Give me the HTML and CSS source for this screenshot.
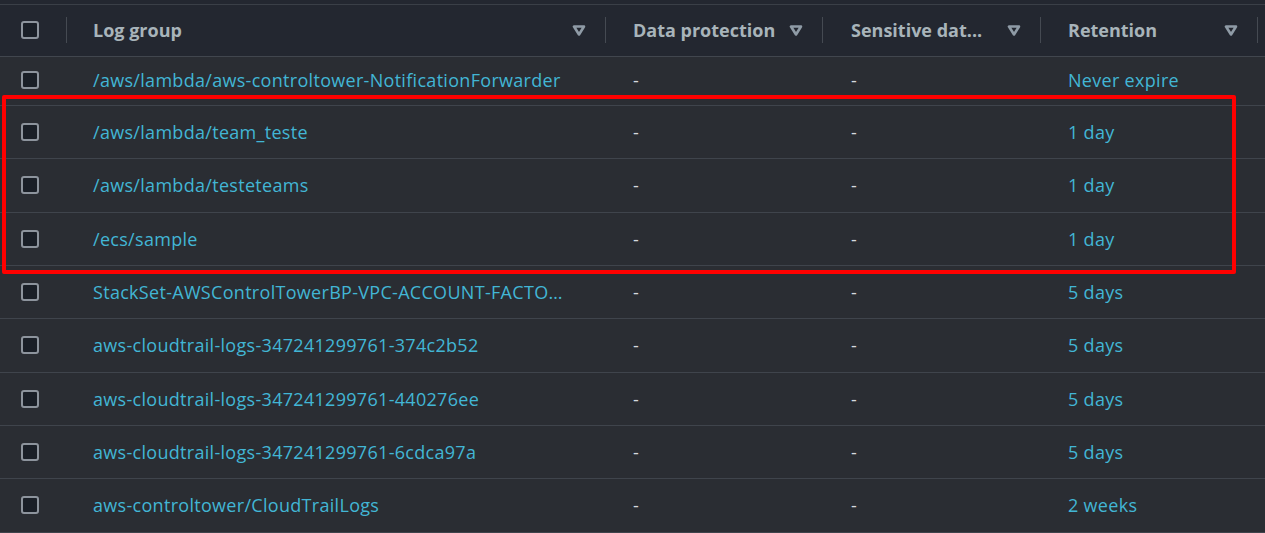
FILE: index.html
```html
<!DOCTYPE html>
<html lang="en">
<head>
<meta charset="utf-8">
<title>Log groups</title>
<link rel="stylesheet" href="styles.css">
</head>
<body>
<div class="table">
  <div class="row head">
    <div class="cell c0"><span class="cb"></span><span class="sep"></span></div>
    <div class="cell c1"><span class="label">Log group</span><svg class="tri" viewBox="0 0 14 11"><polygon points="2,1.5 12,1.5 7,9.5" /></svg><span class="sep"></span></div>
    <div class="cell c2"><span class="label">Data protection</span><svg class="tri" viewBox="0 0 14 11"><polygon points="2,1.5 12,1.5 7,9.5" /></svg><span class="sep"></span></div>
    <div class="cell c3"><span class="label">Sensitive dat...</span><svg class="tri" viewBox="0 0 14 11"><polygon points="2,1.5 12,1.5 7,9.5" /></svg><span class="sep"></span></div>
    <div class="cell c4"><span class="label">Retention</span><svg class="tri" viewBox="0 0 14 11"><polygon points="2,1.5 12,1.5 7,9.5" /></svg><span class="sep"></span></div>
    <div class="cell c5"></div>
  </div>

  <div class="row first">
    <div class="cell c0"><span class="cb"></span></div>
    <div class="cell c1"><a class="link">/aws/lambda/aws-controltower-NotificationForwarder</a></div>
    <div class="cell c2"><span class="dash">-</span></div>
    <div class="cell c3"><span class="dash">-</span></div>
    <div class="cell c4"><a class="link">Never expire</a></div>
    <div class="cell c5"></div>
  </div>
  <div class="row">
    <div class="cell c0"><span class="cb"></span></div>
    <div class="cell c1"><a class="link">/aws/lambda/team_teste</a></div>
    <div class="cell c2"><span class="dash">-</span></div>
    <div class="cell c3"><span class="dash">-</span></div>
    <div class="cell c4"><a class="link">1 day</a></div>
    <div class="cell c5"></div>
  </div>
  <div class="row">
    <div class="cell c0"><span class="cb"></span></div>
    <div class="cell c1"><a class="link">/aws/lambda/testeteams</a></div>
    <div class="cell c2"><span class="dash">-</span></div>
    <div class="cell c3"><span class="dash">-</span></div>
    <div class="cell c4"><a class="link">1 day</a></div>
    <div class="cell c5"></div>
  </div>
  <div class="row">
    <div class="cell c0"><span class="cb"></span></div>
    <div class="cell c1"><a class="link">/ecs/sample</a></div>
    <div class="cell c2"><span class="dash">-</span></div>
    <div class="cell c3"><span class="dash">-</span></div>
    <div class="cell c4"><a class="link">1 day</a></div>
    <div class="cell c5"></div>
  </div>
  <div class="row">
    <div class="cell c0"><span class="cb"></span></div>
    <div class="cell c1"><a class="link">StackSet-AWSControlTowerBP-VPC-ACCOUNT-FACTO…</a></div>
    <div class="cell c2"><span class="dash">-</span></div>
    <div class="cell c3"><span class="dash">-</span></div>
    <div class="cell c4"><a class="link">5 days</a></div>
    <div class="cell c5"></div>
  </div>
  <div class="row">
    <div class="cell c0"><span class="cb"></span></div>
    <div class="cell c1"><a class="link">aws-cloudtrail-logs-347241299761-374c2b52</a></div>
    <div class="cell c2"><span class="dash">-</span></div>
    <div class="cell c3"><span class="dash">-</span></div>
    <div class="cell c4"><a class="link">5 days</a></div>
    <div class="cell c5"></div>
  </div>
  <div class="row">
    <div class="cell c0"><span class="cb"></span></div>
    <div class="cell c1"><a class="link">aws-cloudtrail-logs-347241299761-440276ee</a></div>
    <div class="cell c2"><span class="dash">-</span></div>
    <div class="cell c3"><span class="dash">-</span></div>
    <div class="cell c4"><a class="link">5 days</a></div>
    <div class="cell c5"></div>
  </div>
  <div class="row">
    <div class="cell c0"><span class="cb"></span></div>
    <div class="cell c1"><a class="link">aws-cloudtrail-logs-347241299761-6cdca97a</a></div>
    <div class="cell c2"><span class="dash">-</span></div>
    <div class="cell c3"><span class="dash">-</span></div>
    <div class="cell c4"><a class="link">5 days</a></div>
    <div class="cell c5"></div>
  </div>
  <div class="row">
    <div class="cell c0"><span class="cb"></span></div>
    <div class="cell c1"><a class="link">aws-controltower/CloudTrailLogs</a></div>
    <div class="cell c2"><span class="dash">-</span></div>
    <div class="cell c3"><span class="dash">-</span></div>
    <div class="cell c4"><a class="link">2 weeks</a></div>
    <div class="cell c5"></div>
  </div>

  <div class="highlight"></div>
</div>
</body>
</html>
```

FILE: styles.css
```css
html, body {
  margin: 0;
  padding: 0;
}
body {
  background: #2a2d33;
  font-family: "Open Sans", "Noto Sans", sans-serif;
  font-size: 18px;
  overflow: hidden;
  height: 533px;
}
.table {
  position: relative;
  width: 1265px;
}
.row {
  display: grid;
  grid-template-columns: 67px 539px 217px 218px 217px 1fr;
  height: 53.33px;
  box-sizing: border-box;
  border-bottom: 1px solid #3f444c;
  background: #2a2d33;
}
.row.head {
  background: #232730;
  height: 57px;
  padding-top: 4px;
  border-bottom: 1px solid #41464e;
}
.row.first {
  height: 49px;
}
.row.first .cell {
  padding-bottom: 3px;
}
.cell {
  display: flex;
  align-items: center;
  min-width: 0;
  padding-left: 27px;
  box-sizing: border-box;
}
.head .cell {
  border-top: 1px solid #3a3f47;
  padding-bottom: 2px;
}
.cell.c0 {
  padding-left: 21px;
}
.cell.c1 {
  padding-left: 26px;
}
.cell.c3 {
  padding-left: 28px;
}
.cb {
  width: 18px;
  height: 18px;
  box-sizing: border-box;
  border: 2px solid #8d949d;
  border-radius: 3px;
  background: #1a1f27;
  flex: none;
}
.label {
  font-weight: 700;
  color: #a8b4ba;
  white-space: nowrap;
  flex: 1;
  min-width: 0;
}
.tri {
  width: 14px;
  height: 11px;
  flex: none;
  margin-right: 19px;
  margin-top: 2px;
}
.tri polygon {
  fill: none;
  stroke: #8f9ba6;
  stroke-width: 2.6;
  stroke-linejoin: round;
}
.sep {
  width: 1px;
  height: 26px;
  background: #454a52;
  flex: none;
  margin-left: auto;
}
.link {
  color: #42b6d5;
  white-space: nowrap;
  letter-spacing: 0.3px;
}
.dash {
  color: #d5dadf;
}
.highlight {
  position: absolute;
  left: 2px;
  top: 95px;
  width: 1234px;
  height: 179px;
  box-sizing: border-box;
  border: 4px solid #ff0000;
  border-radius: 2px;
  pointer-events: none;
}
```
